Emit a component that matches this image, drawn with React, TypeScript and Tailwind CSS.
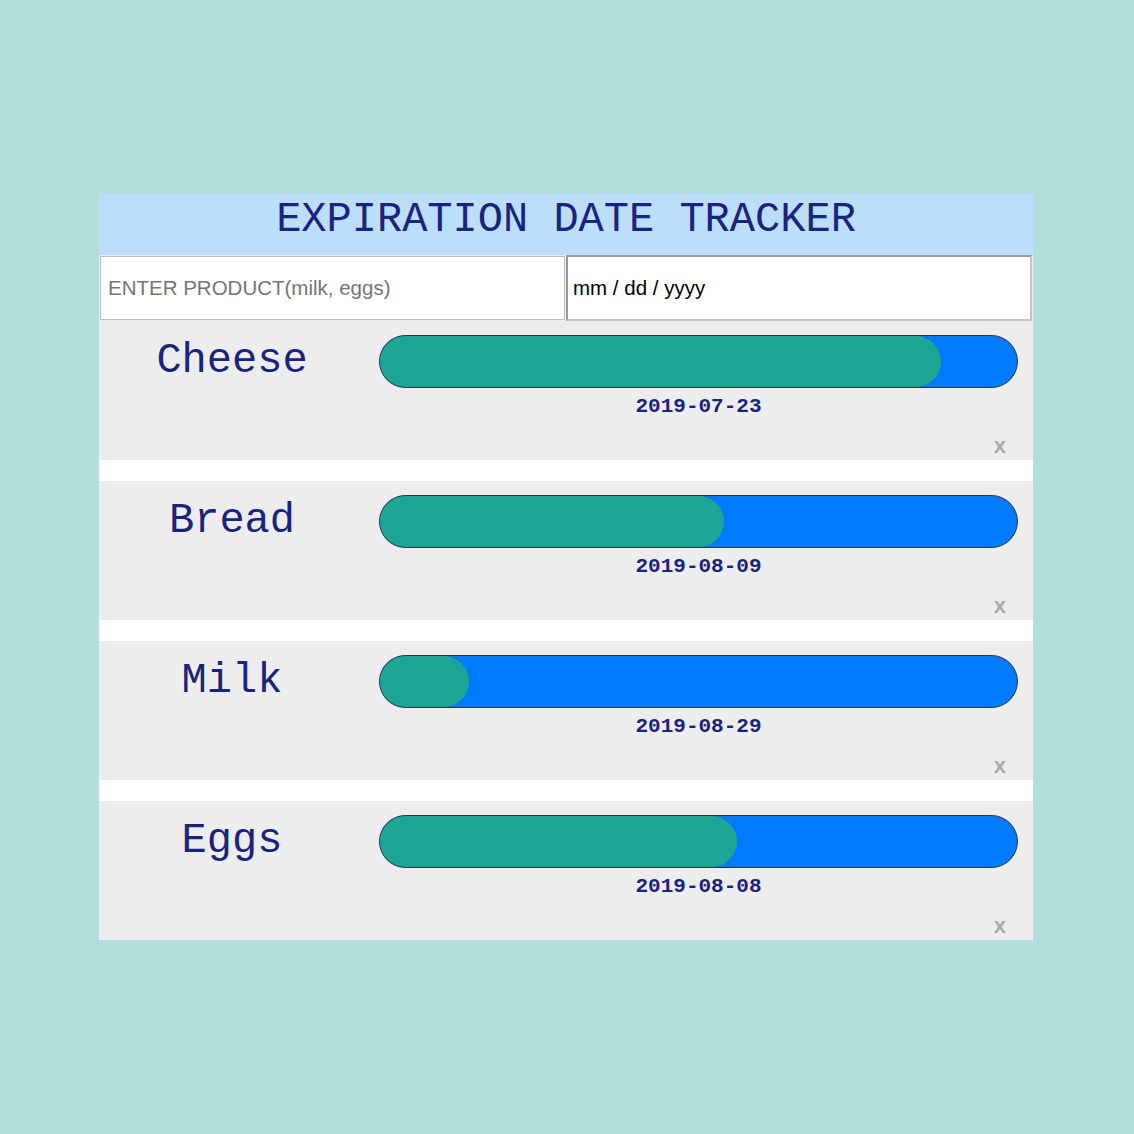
import React from 'react';

interface Product {
  name: string;
  date: string;
  percent: number;
}

const products: Product[] = [
  { name: 'Cheese', date: '2019-07-23', percent: 88 },
  { name: 'Bread', date: '2019-08-09', percent: 54 },
  { name: 'Milk', date: '2019-08-29', percent: 14 },
  { name: 'Eggs', date: '2019-08-08', percent: 56 },
];

const ProductRow: React.FC<{ item: Product; first: boolean }> = ({ item, first }) => (
  <div className={`flex h-[139px] bg-[#ededed] ${first ? '' : 'mt-[21px]'}`}>
    <div className="w-[266px] pt-[17px] text-center">
      <div className="h-[52px] leading-[46px] text-[42px] text-[#1a237e] font-['Liberation_Mono',monospace]">
        {item.name}
      </div>
    </div>
    <div className="flex-1 flex flex-col pt-[14px] pl-[14px] pr-[15px]">
      <div className="h-[53px] rounded-full border border-[#333] bg-[#007bff] overflow-hidden">
        <div
          className="h-full rounded-full bg-[#1da595]"
          style={{ width: `${item.percent}%` }}
        />
      </div>
      <div className="mt-[8px] text-center text-[21px] leading-[22px] font-bold text-[#1a237e] font-['Liberation_Mono',monospace]">
        {item.date}
      </div>
      <div className="flex justify-end pr-[12px] mt-[17px]">
        <button className="text-[22px] leading-[22px] font-bold text-[#aaa] font-['Liberation_Sans',sans-serif]">x</button>
      </div>
    </div>
  </div>
);

const App: React.FC = () => {
  return (
    <div className="min-h-screen bg-[#b2dfdb] pt-[193px] pl-[99px]">
      <div className="w-[934px] bg-white">
        <div className="h-[62px] bg-[#bbdefb] flex items-center justify-center">
          <h1 className="text-[42px] leading-[48px] text-[#1a237e] font-['Liberation_Mono',monospace] -mt-[8px]">
            EXPIRATION DATE TRACKER
          </h1>
        </div>
        <div className="flex h-[66px] bg-[#ededed]">
          <input
            type="text"
            placeholder="ENTER PRODUCT(milk, eggs)"
            className="w-[465px] h-[64px] ml-px mt-px mr-px bg-white border border-[#bdbdbd] pl-[7px] text-[20.5px] text-black placeholder:text-[#757575] font-['Liberation_Sans',sans-serif] outline-none"
          />
          <input
            type="text"
            placeholder="mm / dd / yyyy"
            className="w-[466px] h-[66px] bg-white border-2 border-t-[#9a9a9a] border-l-[#9a9a9a] border-b-[#c3c3c3] border-r-[#c3c3c3] pl-[5px] text-[20.5px] text-black placeholder:text-black font-['Liberation_Sans',sans-serif] outline-none"
          />
        </div>
        {products.map((item, i) => (
          <ProductRow key={item.name} item={item} first={i === 0} />
        ))}
      </div>
    </div>
  );
};

export default App;
